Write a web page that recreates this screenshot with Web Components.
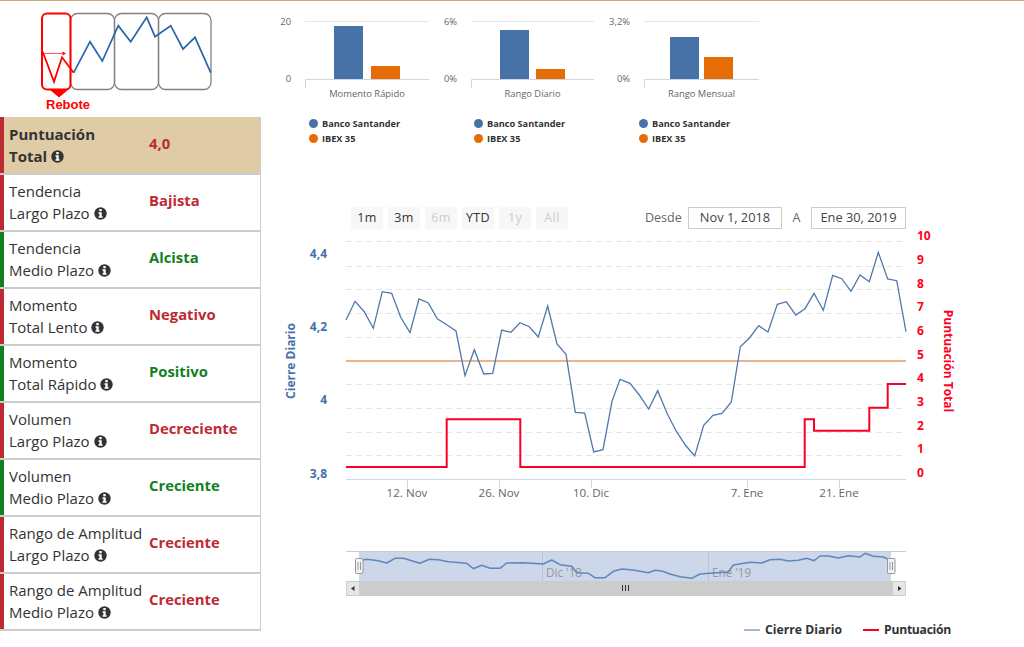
<!DOCTYPE html>
<html lang="es">
<head>
<meta charset="utf-8">
<title>Banco Santander</title>
<style>
html,body{margin:0;padding:0;background:#fff;}
body{font-family:"Open Sans",sans-serif;color:#333;width:1024px;height:647px;overflow:hidden;}
</style>
</head>
<body>
<analysis-page>
  <rebote-logo slot="left"></rebote-logo>
  <score-row slot="left" kind="head" status="bad" value="4,0"><span>Puntuación</span><span>Total</span></score-row>
  <score-row slot="left" status="bad" value="Bajista"><span>Tendencia</span><span>Largo Plazo</span></score-row>
  <score-row slot="left" status="good" value="Alcista"><span>Tendencia</span><span>Medio Plazo</span></score-row>
  <score-row slot="left" status="bad" value="Negativo"><span>Momento</span><span>Total Lento</span></score-row>
  <score-row slot="left" status="good" value="Positivo"><span>Momento</span><span>Total Rápido</span></score-row>
  <score-row slot="left" status="bad" value="Decreciente"><span>Volumen</span><span>Largo Plazo</span></score-row>
  <score-row slot="left" status="good" value="Creciente"><span>Volumen</span><span>Medio Plazo</span></score-row>
  <score-row slot="left" status="bad" value="Creciente"><span>Rango de Amplitud</span><span>Largo Plazo</span></score-row>
  <score-row slot="left" status="bad" value="Creciente"><span>Rango de Amplitud</span><span>Medio Plazo</span></score-row>

  <mini-chart slot="top" label="Momento Rápido" max="20" min="0" px0="25" px1="149" b1="26" b2="66" x1="54" x2="91"></mini-chart>
  <mini-chart slot="top" label="Rango Diario" max="6%" min="0%" px0="26" px1="149" b1="30" b2="69" x1="55" x2="91"></mini-chart>
  <mini-chart slot="top" label="Rango Mensual" max="3,2%" min="0%" px0="34" px1="149" b1="37" b2="57" x1="60" x2="94"></mini-chart>

  <stock-chart slot="main"></stock-chart>
</analysis-page>

<script>
//pagina: columna izquierda (logo + tabla) y columna derecha (graficos)
class AnalysisPage extends HTMLElement{
    constructor(){
        super();
        this.attachShadow({mode:'open'});
        this.shadowRoot.innerHTML = `
            <style>
                :host{display:flex;width:1024px;height:646px;border-top:1px solid #c9ad78;}
                .left{width:261px;flex:none;}
                .right{margin-left:19px;width:680px;flex:none;}
                .top{display:flex;height:199px;}
            </style>
            <div class="left"><slot name="left"></slot></div>
            <div class="right">
                <div class="top"><slot name="top"></slot></div>
                <slot name="main"></slot>
            </div>
        `;
    }
}
customElements.define('analysis-page',AnalysisPage);

class RebotLogo extends HTMLElement{
    constructor(){
        super();
        this.attachShadow({mode:'open'});
        this.shadowRoot.innerHTML = `
            <style>
                :host{display:block;height:116px;}
                svg{display:block;}
                text{font:bold 13px "Liberation Sans",Arial,sans-serif;fill:#f00;}
            </style>
            <svg width="261" height="116" viewBox="0 1 261 116">
                <g fill="none" stroke="#808080" stroke-width="1.3">
                    <rect x="70.5" y="13.5" width="44" height="76" rx="7"/>
                    <rect x="114.5" y="13.5" width="44" height="76" rx="7"/>
                    <rect x="158.5" y="13.5" width="52.5" height="76" rx="7"/>
                </g>
                <polyline fill="none" stroke="#2a65a8" stroke-width="1.7" points="73.7,72.7 90,41.7 102.3,61 118.3,25.7 130.7,41.7 146.7,17.3 155,36.7 170.7,25.7 183,49 195,37.3 210.7,72.7"/>
                <polyline fill="none" stroke="#f00" stroke-width="1.8" points="42.7,51.7 54,81.7 62,57.3 73.7,72.7"/>
                <path d="M44 53.4H65" stroke="#f7505a" stroke-width="1" fill="none"/>
                <path d="M62.5 51.4L66 53.4L62.5 55.4Z" fill="#f00"/>
                <rect x="42" y="13.5" width="28.5" height="76" rx="5" fill="none" stroke="#f00" stroke-width="2"/>
                <path d="M49 89H69L59 97.5Z" fill="#f00"/>
                <text x="46" y="109">Rebote</text>
            </svg>
        `;
    }
}
customElements.define('rebote-logo',RebotLogo);

//fila de la tabla, el texto entra por el slot
class ScoreRow extends HTMLElement{
    constructor(){
        super();
        this.attachShadow({mode:'open'});
    }
    connectedCallback(){
        const color = this.getAttribute('status') == 'good' ? '#12801f' : '#bd2a33';
        this.shadowRoot.innerHTML = `
            <style>
                :host{display:flex;height:55px;border-bottom:2px solid #ccc;border-right:1px solid #ccc;width:260px;background:#fff;}
                :host([kind=head]){height:56px;background:#dfcba5;font-weight:700;}
                :host([kind=head]) .txt{font-size:15px;padding-bottom:0;}
                :host(:last-child){border-bottom-width:1px;}
                .bar{width:4px;flex:none;background:${color};}
                .txt{width:140px;flex:none;padding:0 0 1px 5px;box-sizing:border-box;margin-right:1px;font-size:15px;line-height:22px;color:#333;display:flex;flex-direction:column;justify-content:center;white-space:nowrap;}
                ::slotted(span){display:block;}
                ::slotted(span:last-child){display:flex;align-items:center;}
                .val{font-size:14.8px;font-weight:700;color:${color};align-self:center;margin-left:4px;padding-bottom:5px;}
            </style>
            <div class="bar"></div>
            <div class="txt">
                <slot></slot>
            </div>
            <div class="val">${this.getAttribute('value')}</div>
        `;
        const last = this.querySelector('span:last-child');
        last.style.gap = '4px';
        last.insertAdjacentHTML('beforeend','<info-icon></info-icon>');
    }
}
customElements.define('score-row',ScoreRow);

class InfoIcon extends HTMLElement{
    constructor(){
        super();
        this.attachShadow({mode:'open'});
        this.shadowRoot.innerHTML = `
            <style>:host{display:inline-block;width:13px;height:13px;line-height:0;}</style>
            <svg width="13" height="13" viewBox="0 0 13 13">
                <circle cx="6.5" cy="6.5" r="6.2" fill="#333"/>
                <rect x="5.3" y="2.1" width="2.4" height="2.1" rx=".3" fill="#fff"/>
                <path d="M4.5 5.3H7.7V9.3H8.6V10.7H4.5V9.3H5.4V6.7H4.5Z" fill="#fff"/>
            </svg>
        `;
    }
}
customElements.define('info-icon',InfoIcon);

class MiniChart extends HTMLElement{
    constructor(){
        super();
        this.attachShadow({mode:'open'});
    }
    connectedCallback(){
        const a = n => this.getAttribute(n);
        const px0 = +a('px0'), px1 = +a('px1');
        this.shadowRoot.innerHTML = `
            <style>
                :host{display:block;width:165px;flex:none;}
                svg{display:block;margin-left:-25px;}
                text{font:9.4px "Open Sans",sans-serif;fill:#666;}
                ul{list-style:none;margin:10px 0 0;padding:0 0 0 29px;font:bold 9.2px/15px "Open Sans",sans-serif;color:#333;}
                li{display:flex;align-items:center;gap:4px;}
                i{width:9px;height:9px;border-radius:50%;background:#4672a8;}
                li+li i{background:#e66c05;}
            </style>
            <svg width="190" height="105" viewBox="-25 1 190 105">
                <path d="M${px0} 21.5H${px1}" stroke="#e6e6e6"/>
                <path d="M${px0}.5 88V79.5H${px1}" stroke="#ccd6eb" fill="none"/>
                <text x="${px0-14}" y="25" text-anchor="end">${a('max')}</text>
                <text x="${px0-14}" y="82" text-anchor="end">${a('min')}</text>
                <rect x="${a('x1')}" y="${a('b1')}" width="29" height="${79-a('b1')}" fill="#4672a8"/>
                <rect x="${a('x2')}" y="${a('b2')}" width="29" height="${79-a('b2')}" fill="#e66c05"/>
                <text x="${(px0+px1)/2}" y="97" text-anchor="middle">${a('label')}</text>
            </svg>
            <ul><li><i></i>Banco Santander</li><li><i></i>IBEX 35</li></ul>
        `;
    }
}
customElements.define('mini-chart',MiniChart);

//grafico principal. Las coordenadas del svg son las de la pagina (viewBox)
class StockChart extends HTMLElement{
    constructor(){
        super();
        this.attachShadow({mode:'open'});
    }
    lineaPrincipal(){
        const left = [[198,360],[225,304],[253,335],[280,385],[307,275],[335,280],[362,352],[390,398],[417,297],[445,309],[472,356],[500,374],[528,393],[555,527],[583,449],[611,522],[638,520],[665,390],[693,397],[720,368],[748,380],[775,411],[803,318],[831,432],[858,463],[886,637],[914,639],[941,756],[969,749],[996,604]];
        const right = [[0,538],[30,550],[58,585],[86,627],[113,572],[141,640],[168,692],[196,735],[224,768],[251,676],[279,646],[306,640],[334,606],[361,440],[389,413],[416,377],[444,396],[472,313],[499,305],[527,345],[555,326],[582,280],[610,331],[638,226],[665,236],[693,274],[720,225],[748,245],[775,157],[803,237],[830,242],[858,395]];
        return left.map(p => [280+p[0]/3,200+p[1]/3]).concat(right.map(p => [620+p[0]/3,200+p[1]/3]))
            .map(p => p[0].toFixed(1)+','+p[1].toFixed(1)).join(' ');
    }
    lineaNavegador(){
        const a = [[58,62],[80,58],[115,62],[140,69],[165,55],[190,55],[240,70],[268,58],[295,59],[325,65],[380,70],[400,86],[425,76],[450,85],[480,85],[500,69],[550,68],[610,72],[635,60],[660,74],[695,79],[710,98],[745,100],[765,113],[795,113],[820,94],[845,87],[880,90],[925,98],[945,91],[965,93],[990,102]];
        const b = [[0,110],[35,115],[60,102],[100,99],[145,96],[160,75],[210,67],[245,69],[270,59],[300,58],[325,63],[355,61],[380,55],[402,62],[420,48],[445,48],[475,54],[505,47],[540,51],[555,40],[580,49],[610,51],[625,58]];
        return a.map(p => [340+p[0]/3,540+p[1]/3]).concat(b.map(p => [680+p[0]/3,540+p[1]/3]))
            .map(p => p[0].toFixed(1)+','+p[1].toFixed(1)).join(' ');
    }
    connectedCallback(){
        const grid = [241,266,289,313,337,384,408,432,455].map(y => `<path d="M346 ${y}.5H906" stroke="#e6e6e6" stroke-dasharray="6 4"/>`).join('');
        const ticks = [[407,'12. Nov'],[499,'26. Nov'],[591,'10. Dic'],[747,'7. Ene'],[839,'21. Ene']].map(t =>
            `<path d="M${t[0]}.5 479V488" stroke="#ccd6eb"/><text class="x" x="${t[0]}" y="497" text-anchor="middle">${t[1]}</text>`).join('');
        const leftAxis = [['4,4',258],['4,2',331],['4',404],['3,8',478]].map(t =>
            `<text class="yl" x="327" y="${t[1]}" text-anchor="end">${t[0]}</text>`).join('');
        const rightAxis = [240,264,288,311,335,359,382,406,430,453,477].map((y,i) =>
            `<text class="yr" x="917" y="${y}">${10-i}</text>`).join('');
        this.shadowRoot.innerHTML = `
            <style>
                :host{display:block;width:680px;padding-top:7px;}
                .bar{display:flex;width:626px;height:22px;font-size:12.5px;color:#333;align-items:stretch;padding-left:71px;box-sizing:border-box;}
                .btn{width:32px;flex:none;margin-right:5px;background:#f7f7f7;display:flex;align-items:center;justify-content:center;letter-spacing:.4px;padding-bottom:2px;box-sizing:border-box;}
                .btn.off{color:#ccc;}
                .lab{color:#666;display:flex;align-items:center;flex:none;padding-bottom:2px;box-sizing:border-box;}
                .date{border:1px solid #ccc;box-sizing:border-box;height:22px;display:flex;align-items:center;justify-content:center;color:#444;flex:none;font-size:12.8px;padding-bottom:2px;}
                svg{display:block;margin-top:-10px;}
                text{font-family:"Open Sans",sans-serif;}
                .x{font-size:11.6px;fill:#666;}
                .yl{font-size:12px;font-weight:700;fill:#4672a8;}
                .yr{font-size:12px;font-weight:700;fill:#ff0020;}
                .tl{font-size:12px;font-weight:700;fill:#4672a8;}
                .tr{font-size:12px;font-weight:700;fill:#ff0020;}
                .nav{font-size:11.7px;fill:#999;}
                .legend{display:flex;justify-content:flex-end;width:671px;margin-top:23px;font-size:12.2px;font-weight:700;color:#333;line-height:14px;}
                .legend span{display:flex;align-items:center;gap:5px;margin-left:21px;}
                .legend span+span{letter-spacing:-.3px;}
                .legend i{width:16px;height:2px;background:#a5b8d6;}
                .legend span+span i{background:#fb0026;}
            </style>
            <div class="bar">
                <div class="btn">1m</div><div class="btn">3m</div><div class="btn off">6m</div><div class="btn">YTD</div><div class="btn off">1y</div><div class="btn off">All</div>
                <div class="lab" style="margin-left:72px;width:43px;">Desde</div>
                <div class="date" style="width:94px;">Nov 1, 2018</div>
                <div class="lab" style="width:29px;justify-content:center;">A</div>
                <div class="date" style="width:95px;">Ene 30, 2019</div>
            </div>
            <svg width="680" height="381" viewBox="280 219 680 381">
                ${grid}
                <path d="M346 479.5H906" stroke="#ccd6eb"/>
                ${ticks}
                <path d="M346 361H906" stroke="#e8b68e" stroke-width="2"/>
                <polyline fill="none" stroke="#4f78ab" stroke-width="1.3" points="${this.lineaPrincipal()}"/>
                <polyline fill="none" stroke="#fb0026" stroke-width="2" points="346,467 446.7,467 446.7,419.3 520.3,419.3 520.3,467 804.7,467 804.7,419.3 814,419.3 814,430.7 869.3,430.7 869.3,407.7 887.7,407.7 887.7,384 906,384"/>
                ${leftAxis}
                ${rightAxis}
                <text class="tl" transform="translate(295 361) rotate(-90)" text-anchor="middle">Cierre Diario</text>
                <text class="tr" transform="translate(944 361) rotate(90)" text-anchor="middle">Puntuación Total</text>

                <path d="M346 551.5H906" stroke="#ccc"/>
                <rect x="359" y="552" width="532" height="29" fill="#cdd7ea"/>
                <path d="M542.5 552V581M708.5 552V581" stroke="#b9c4da"/>
                <text class="nav" x="546" y="577">Dic '18</text>
                <text class="nav" x="712" y="577">Ene '19</text>
                <polyline fill="none" stroke="#5f87bc" stroke-width="1.5" stroke-linejoin="round" points="${this.lineaNavegador()}"/>
                <rect x="346" y="581" width="560" height="15" fill="#ccc"/>
                <rect x="346.5" y="581.5" width="13" height="14" fill="#e6e6e6" stroke="#ccc"/>
                <rect x="892.5" y="581.5" width="13" height="14" fill="#e6e6e6" stroke="#ccc"/>
                <path d="M354.5 586V591L351 588.5Z" fill="#333"/>
                <path d="M898 586V591L901.5 588.5Z" fill="#333"/>
                <path d="M622.5 585V591M625.5 585V591M628.5 585V591" stroke="#333"/>
                <g fill="#f2f2f2" stroke="#999">
                    <rect x="355.5" y="558.5" width="7.5" height="15" rx="1"/>
                    <rect x="887.5" y="558.5" width="7.5" height="15" rx="1"/>
                </g>
                <path d="M358 562V570M360.5 562V570M890 562V570M892.5 562V570" stroke="#999"/>
            </svg>
            <div class="legend"><span><i></i>Cierre Diario</span><span><i></i>Puntuación</span></div>
        `;
    }
}
customElements.define('stock-chart',StockChart);
</script>
</body>
</html>
